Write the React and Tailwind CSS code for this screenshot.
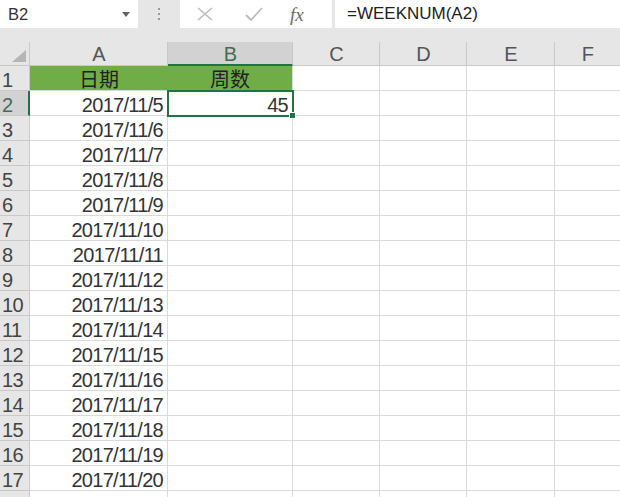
import React from 'react';

// spreadsheet snapshot: name box, formula bar and a small grid

const dates = Array.from({ length: 16 }, (_, i) => `2017/11/${i + 5}`);
const letters = ['A', 'B', 'C', 'D', 'E', 'F'];

const rowHead = 'h-[25px] pt-[5px] leading-[19px] pl-[2px] bg-[#e6e6e6] border-r border-b border-[#c9c9c9] text-[#444]';
const cell = 'h-[25px] pt-[5px] leading-[19px] border-r border-b border-[#dadada]';

const App = () => {
    return (
        <div className="w-[620px] h-[497px] overflow-hidden bg-[#e6e6e6] font-['Liberation_Sans','Noto_Sans_CJK_SC',sans-serif]">
            {/* Top bar */}
            <div className="flex h-[28px]">
                <div className="w-[138px] bg-white flex items-center justify-between pl-[8px] pr-[8px]">
                    <span className="text-[16.5px] text-[#333]">B2</span>
                    <svg width="8" height="5" viewBox="0 0 8 5">
                        <path d="M0 0 L8 0 L4 5 Z" fill="#666" />
                    </svg>
                </div>
                <div className="w-[42px] flex items-center justify-center">
                    <div className="flex flex-col gap-[3px]">
                        <span className="w-[2px] h-[2px] bg-[#9a9a9a]" />
                        <span className="w-[2px] h-[2px] bg-[#9a9a9a]" />
                        <span className="w-[2px] h-[2px] bg-[#9a9a9a]" />
                    </div>
                </div>
                <div className="w-[152px] bg-white flex items-center pl-[17px]">
                    <svg width="16" height="14" viewBox="0 0 16 14" className="mr-[32px]">
                        <path d="M1 1 L15 13 M15 1 L1 13" stroke="#bcbcbc" strokeWidth="1.6" fill="none" />
                    </svg>
                    <svg width="18" height="14" viewBox="0 0 18 14" className="mr-[27px]">
                        <path d="M1 8 L6 13 L17 1" stroke="#bcbcbc" strokeWidth="1.8" fill="none" />
                    </svg>
                    <span className="font-['Liberation_Serif',serif] italic text-[19px] text-[#6a6a6a] leading-none">fx</span>
                </div>
                <div className="w-[3px]" />
                <div className="flex-1 bg-white flex items-center pl-[12px] text-[17px] text-[#222]">
                    =WEEKNUM(A2)
                </div>
            </div>

            <div className="h-[14px]" />

            {/* Grid */}
            <div className="grid grid-cols-[30px_138px_125px_87px_87px_88px_1fr] text-[20px] tracking-[-0.7px]">
                {/* column headers */}
                <div className="h-[24px] bg-[#e6e6e6] border-r border-b border-[#c9c9c9] flex items-end justify-end pr-[3px] pb-[3px]">
                    <svg width="14" height="12" viewBox="0 0 14 12">
                        <path d="M14 0 L14 12 L0 12 Z" fill="#b5b5b5" />
                    </svg>
                </div>
                {letters.map((l) => (
                    <div
                        key={l}
                        className={
                            l === 'B'
                                ? 'h-[24px] pt-[3px] leading-[19px] text-center bg-[#d2d2d2] border-r border-[#c9c9c9] border-b-2 border-b-[#217346] text-[#456b55]'
                                : l === 'F'
                                ? 'h-[24px] pt-[3px] leading-[19px] text-center bg-[#e6e6e6] border-b border-[#c9c9c9] text-[#555]'
                                : 'h-[24px] pt-[3px] leading-[19px] text-center bg-[#e6e6e6] border-r border-b border-[#c9c9c9] text-[#555]'
                        }
                    >
                        {l}
                    </div>
                ))}

                {/* row 1 */}
                <div className={rowHead}>1</div>
                <div className="h-[25px] pt-[5px] leading-[19px] text-center bg-[#70ad47] border-b border-[#dadada] text-[#222] tracking-normal">日期</div>
                <div className="h-[25px] pt-[5px] leading-[19px] text-center bg-[#70ad47] border-r border-b border-[#dadada] text-[#222] tracking-normal">周数</div>
                <div className={`${cell} bg-white`} />
                <div className={`${cell} bg-white`} />
                <div className={`${cell} bg-white`} />
                <div className="h-[25px] border-b border-[#dadada] bg-white" />

                {/* data rows */}
                {dates.map((d, i) => {
                    const n = i + 2;
                    const selected = n === 2;
                    return (
                        <React.Fragment key={d}>
                            <div
                                className={
                                    selected
                                        ? 'h-[25px] pt-[5px] leading-[19px] pl-[2px] bg-[#d2d2d2] border-b border-[#c9c9c9] border-r-2 border-r-[#217346] text-[#456b55]'
                                        : rowHead
                                }
                            >
                                {n}
                            </div>
                            <div className={`${cell} bg-white text-right pr-[4px] text-[#333]`}>{d}</div>
                            <div className={`${cell} bg-white text-right pr-[4px] text-[#333] relative`}>
                                {selected && (
                                    <>
                                        45
                                        <div className="absolute z-10 -left-[1px] -top-[1px] w-[127px] h-[27px] border-2 border-[#217346]" />
                                        <div className="absolute z-20 -right-[4px] -bottom-[4px] w-[7px] h-[7px] bg-[#217346] border border-white" />
                                    </>
                                )}
                            </div>
                            <div className={`${cell} bg-white`} />
                            <div className={`${cell} bg-white`} />
                            <div className={`${cell} bg-white`} />
                            <div className="h-[25px] border-b border-[#dadada] bg-white" />
                        </React.Fragment>
                    );
                })}

                {/* partial row 18 */}
                <div className="h-[25px] bg-[#e6e6e6] border-r border-[#c9c9c9]" />
                <div className={`${cell} bg-white`} />
                <div className={`${cell} bg-white`} />
                <div className={`${cell} bg-white`} />
                <div className={`${cell} bg-white`} />
                <div className={`${cell} bg-white`} />
                <div className="h-[25px] bg-white" />
            </div>
        </div>
    );
};

export default App;
